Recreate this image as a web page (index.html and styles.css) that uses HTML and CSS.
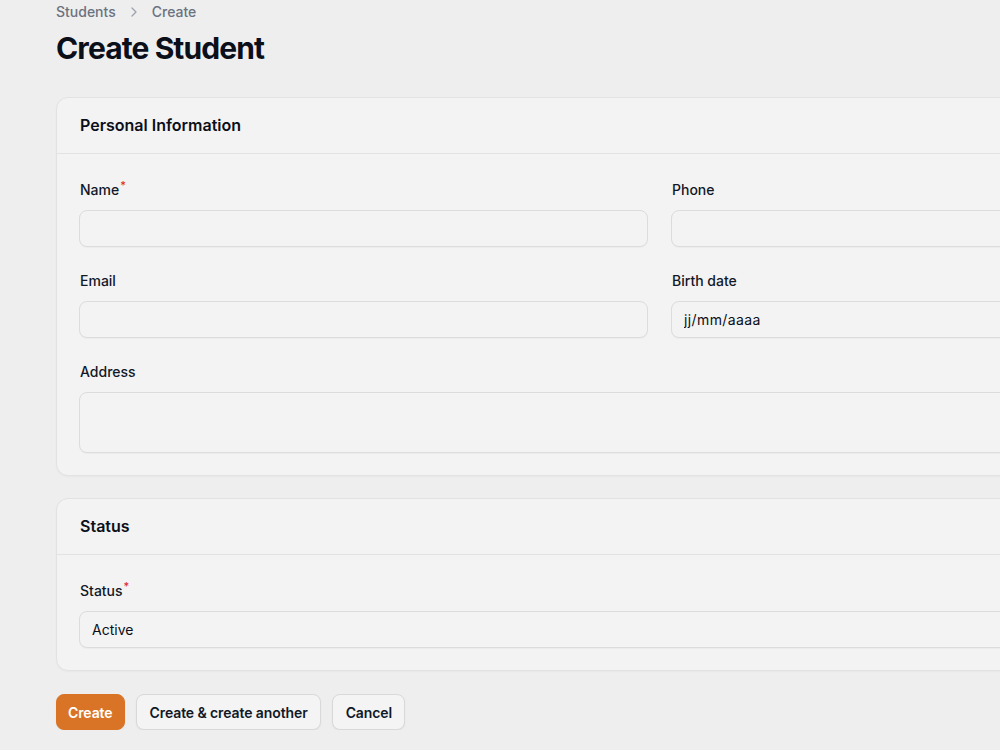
FILE: index.html
```html
<!DOCTYPE html>
<html lang="en">
<head>
    <meta charset="UTF-8">
    <meta name="viewport" content="width=device-width, initial-scale=1.0">
    <title>Create Student</title>
    <link rel="stylesheet" href="styles.css">
</head>
<body>

<div class="page">
    <nav class="breadcrumbs">
        <span>Students</span>
        <svg class="chevron" viewBox="0 0 20 20" width="16" height="16"><path d="M7.5 5l5 5-5 5" fill="none" stroke="currentColor" stroke-width="1.6" stroke-linecap="round" stroke-linejoin="round"/></svg>
        <span>Create</span>
    </nav>
    <h1>Create Student</h1>

    <form class="form">
        <!-- Personal information -->
        <section class="card">
            <div class="card-header">Personal Information</div>
            <div class="card-body grid">
                <div class="field">
                    <label for="name">Name<sup>*</sup></label>
                    <input type="text" id="name">
                </div>
                <div class="field">
                    <label for="phone">Phone</label>
                    <input type="text" id="phone">
                </div>
                <div class="field">
                    <label for="email">Email</label>
                    <input type="text" id="email">
                </div>
                <div class="field">
                    <label for="birth">Birth date</label>
                    <input type="text" id="birth" class="date" value="jj/mm/aaaa">
                </div>
                <div class="field full">
                    <label for="address">Address</label>
                    <textarea id="address"></textarea>
                </div>
            </div>
        </section>

        <!-- Status -->
        <section class="card">
            <div class="card-header">Status</div>
            <div class="card-body">
                <div class="field">
                    <label for="status">Status<sup>*</sup></label>
                    <select id="status">
                        <option>Active</option>
                        <option>Inactive</option>
                    </select>
                </div>
            </div>
        </section>

        <div class="actions">
            <button type="submit" class="btn primary">Create</button>
            <button type="button" class="btn">Create &amp; create another</button>
            <button type="button" class="btn">Cancel</button>
        </div>
    </form>
</div>

</body>
</html>
```

FILE: styles.css
```css
html, body {
    overflow: hidden;
}
body {
    font-family: Inter, "Noto Sans", sans-serif;
    background-color: #eeeeee;
    color: #0b0f19;
    margin: 0;
}
.page {
    width: 1208px;
    padding: 2px 0 0 56px;
}
.breadcrumbs {
    display: flex;
    align-items: center;
    gap: 10px;
    font-size: 14px;
    font-weight: 500;
    color: #6b7280;
    line-height: 20px;
}
.chevron {
    color: #9ca3af;
}
h1 {
    font-size: 30px;
    font-weight: 700;
    letter-spacing: -0.9px;
    margin: 8px 0 0;
    line-height: 36px;
}
.form {
    margin-top: 31px;
}
.card {
    background-color: #f3f3f3;
    border: 1px solid #e2e2e2;
    border-radius: 12px;
    margin-bottom: 22px;
    box-shadow: 0 1px 2px rgba(0, 0, 0, 0.03);
}
.card-header {
    padding: 15px 23px 16px;
    font-size: 16px;
    font-weight: 600;
    line-height: 24px;
    border-bottom: 1px solid #e2e2e2;
}
.card-body {
    padding: 24px 23px 22px 22px;
}
.grid {
    display: grid;
    grid-template-columns: 1fr 1fr;
    gap: 22px 23px;
}
.full {
    grid-column: span 2;
}
.field {
    display: flex;
    flex-direction: column;
    gap: 8px;
}
label {
    font-size: 14px;
    font-weight: 500;
    line-height: 24px;
    color: #111827;
    padding-left: 1px;
}
sup {
    color: #dc2626;
    font-size: 11px;
    line-height: 0;
    margin-left: 1px;
}
input, select, textarea {
    box-sizing: border-box;
    width: 100%;
    height: 37px;
    margin: 0;
    padding: 0 12px;
    border: 1px solid #dcdcdc;
    border-radius: 8px;
    background-color: #f3f3f3;
    font-family: inherit;
    font-size: 14px;
    color: #0b0f19;
    box-shadow: 0 1px 1px rgba(0, 0, 0, 0.03);
    -webkit-appearance: none;
    appearance: none;
}
.date {
    letter-spacing: 0.4px;
}
textarea {
    height: 61px;
    resize: none;
}
.actions {
    display: flex;
    gap: 11px;
    margin-top: 23px;
}
.btn {
    height: 36px;
    padding: 0 12px 0 13px;
    border: 1px solid #d9d9d9;
    border-radius: 8px;
    background-color: #f4f4f4;
    font-family: inherit;
    font-size: 14px;
    font-weight: 600;
    letter-spacing: -0.1px;
    color: #111827;
    box-shadow: 0 1px 2px rgba(0, 0, 0, 0.05);
}
.btn.primary {
    padding: 0 11px;
    background-color: #d97426;
    border-color: #d97426;
    color: #fff;
}
```
